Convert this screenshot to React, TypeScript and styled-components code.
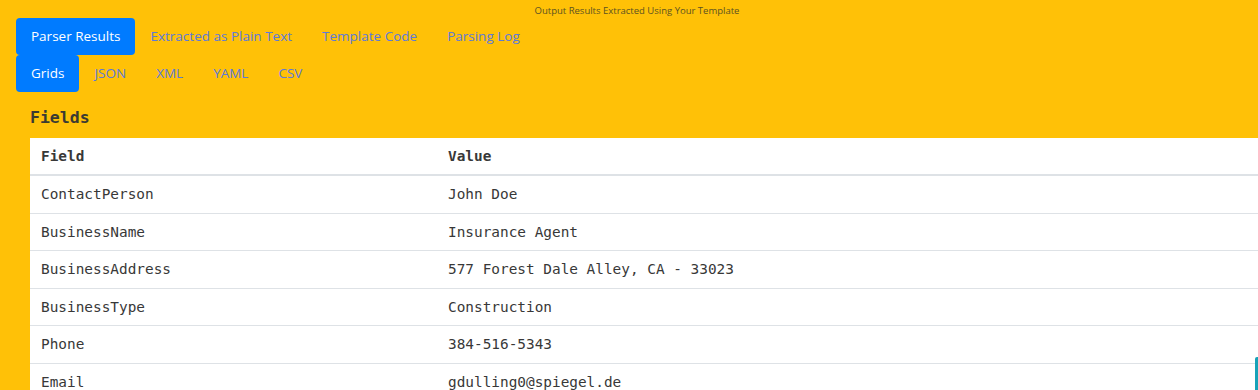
import React from "react";
import styled, { createGlobalStyle } from "styled-components";

const GlobalStyle = createGlobalStyle`
  html, body {
    margin: 0;
    padding: 0;
    background: #ffc107;
    overflow: hidden;
  }
  body {
    font-family: "Open Sans", "Noto Sans", sans-serif;
  }
`;

const Page = styled.div`
  position: relative;
  width: 1258px;
  height: 390px;
  overflow: hidden;
  background: #ffc107;
`;

const Caption = styled.div`
  height: 18px;
  padding-left: 16px;
  font-size: 9.5px;
  line-height: 22px;
  color: #5c5222;
  text-align: center;
`;

const NavRow = styled.div`
  display: flex;
  padding-left: 16px;
`;

const NavPill = styled.a<{ $active?: boolean }>`
  display: block;
  padding: 8px 15px;
  font-size: 13.5px;
  line-height: 21px;
  border-radius: 4px;
  cursor: pointer;
  color: ${(p) => (p.$active ? "#ffffff" : "#5d7ad9")};
  background: ${(p) => (p.$active ? "#007bff" : "transparent")};
`;

const Section = styled.div`
  padding-left: 30px;
`;

const Heading = styled.h5`
  margin: 16px 0 10px;
  font-family: "DejaVu Sans Mono", "Liberation Mono", monospace;
  font-size: 16.5px;
  line-height: 20px;
  font-weight: bold;
  color: #3b3a33;
`;

const Table = styled.table`
  width: 1250px;
  border-collapse: collapse;
  background: #ffffff;
  font-family: "DejaVu Sans Mono", "Liberation Mono", monospace;
  font-size: 14.4px;
  color: #383838;
`;

const HeadCell = styled.th`
  text-align: left;
  font-weight: bold;
  padding: 8px 11px 7px;
  line-height: 21px;
  border-bottom: 2px solid #dee2e6;
`;

const Cell = styled.td<{ $first?: boolean }>`
  padding: 8px 11px;
  line-height: 20.6px;
  border-top: 1px solid #dee2e6;
  width: ${(p) => (p.$first ? "385px" : "auto")};
`;

const SideTab = styled.div`
  position: absolute;
  right: 0;
  top: 357px;
  width: 3px;
  height: 40px;
  border-radius: 2px 0 0 2px;
  background: #17a2b8;
`;

const rows: [string, string][] = [
  ["ContactPerson", "John Doe"],
  ["BusinessName", "Insurance Agent"],
  ["BusinessAddress", "577 Forest Dale Alley, CA - 33023"],
  ["BusinessType", "Construction"],
  ["Phone", "384-516-5343"],
  ["Email", "gdulling0@spiegel.de"],
];

const tabs = ["Parser Results", "Extracted as Plain Text", "Template Code", "Parsing Log"];
const formats = ["Grids", "JSON", "XML", "YAML", "CSV"];

export default function App() {
  return (
    <Page>
      <GlobalStyle />
      <Caption>Output Results Extracted Using Your Template</Caption>
      <NavRow>
        {tabs.map((t, i) => (
          <NavPill key={t} $active={i === 0}>{t}</NavPill>
        ))}
      </NavRow>
      <NavRow>
        {formats.map((f, i) => (
          <NavPill key={f} $active={i === 0}>{f}</NavPill>
        ))}
      </NavRow>
      <Section>
        <Heading>Fields</Heading>
        <Table>
          <thead>
            <tr>
              <HeadCell>Field</HeadCell>
              <HeadCell>Value</HeadCell>
            </tr>
          </thead>
          <tbody>
            {rows.map(([k, v]) => (
              <tr key={k}>
                <Cell $first>{k}</Cell>
                <Cell>{v}</Cell>
              </tr>
            ))}
          </tbody>
        </Table>
      </Section>
      <SideTab />
    </Page>
  );
}
